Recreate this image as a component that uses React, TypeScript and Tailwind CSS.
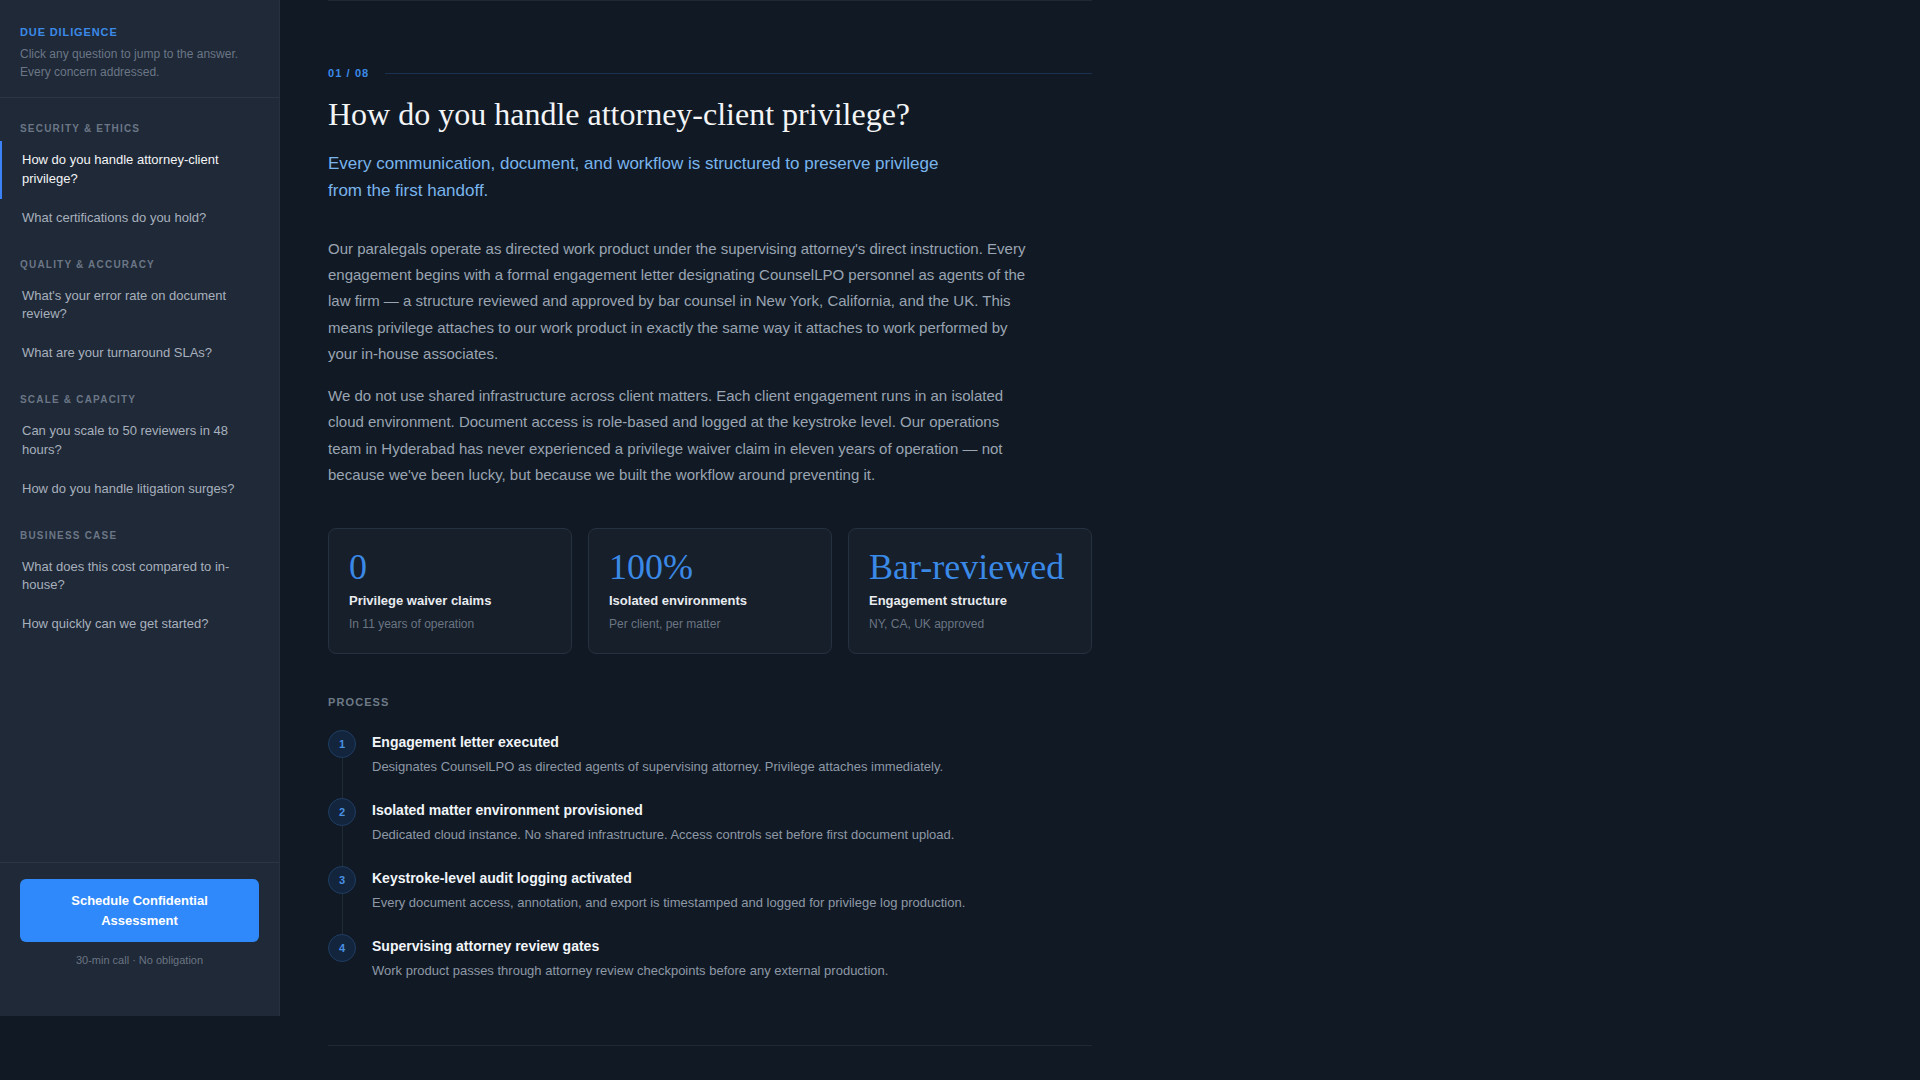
const groups = [
  {
    label: "Security & Ethics",
    items: ["How do you handle attorney-client privilege?", "What certifications do you hold?"],
  },
  {
    label: "Quality & Accuracy",
    items: ["What's your error rate on document review?", "What are your turnaround SLAs?"],
  },
  {
    label: "Scale & Capacity",
    items: ["Can you scale to 50 reviewers in 48 hours?", "How do you handle litigation surges?"],
  },
  {
    label: "Business Case",
    items: ["What does this cost compared to in-house?", "How quickly can we get started?"],
  },
];

const stats = [
  { value: "0", label: "Privilege waiver claims", sub: "In 11 years of operation" },
  { value: "100%", label: "Isolated environments", sub: "Per client, per matter" },
  { value: "Bar-reviewed", label: "Engagement structure", sub: "NY, CA, UK approved" },
];

const steps = [
  {
    title: "Engagement letter executed",
    desc: "Designates CounselLPO as directed agents of supervising attorney. Privilege attaches immediately.",
  },
  {
    title: "Isolated matter environment provisioned",
    desc: "Dedicated cloud instance. No shared infrastructure. Access controls set before first document upload.",
  },
  {
    title: "Keystroke-level audit logging activated",
    desc: "Every document access, annotation, and export is timestamped and logged for privilege log production.",
  },
  {
    title: "Supervising attorney review gates",
    desc: "Work product passes through attorney review checkpoints before any external production.",
  },
];

const Sidebar = () => (
  <aside className="w-[280px] h-[1016px] shrink-0 bg-[#1f2937] border-r border-[#263140] flex flex-col">
    <div className="px-5 pt-6 pb-4 border-b border-[#2b3645]">
      <div className="text-[11px] leading-4 font-bold uppercase tracking-[0.08em] text-[#3b8ae8]">
        Due Diligence
      </div>
      <p className="mt-[5px] text-[12px] leading-[18px] text-[#6b7686]">
        Click any question to jump to the answer.
        <br />
        Every concern addressed.
      </p>
    </div>

    <nav className="flex-1 pt-[23px]">
      {groups.map((g, gi) => (
        <div key={g.label} className={gi > 0 ? "mt-[19px]" : ""}>
          <div className="px-5 mb-[5px] text-[10px] leading-[15px] font-bold uppercase tracking-[0.12em] text-[#6b7686]">
            {g.label}
          </div>
          {g.items.map((q, qi) => {
            const active = gi === 0 && qi === 0;
            return (
              <a
                key={q}
                href="#"
                className={
                  active
                    ? "block border-l-2 border-[#3b82f6] pl-5 pr-5 py-2.5 text-[13px] leading-[1.45] text-[#f3f4f6]"
                    : "block border-l-2 border-transparent pl-5 pr-5 py-2.5 text-[13px] leading-[1.45] text-[#a7b0bd]"
                }
              >
                {q}
              </a>
            );
          })}
        </div>
      ))}
    </nav>

    <div className="px-5 pt-4 pb-12 border-t border-[#2b3645]">
      <button className="w-full rounded-md bg-[#2f89fb] py-3 px-4 text-[13px] leading-[1.5] font-bold text-white">
        Schedule Confidential
        <br />
        Assessment
      </button>
      <div className="mt-2.5 text-center text-[11px] leading-4 text-[#6b7483]">
        30-min call · No obligation
      </div>
    </div>
  </aside>
);

const StatCard = ({ value, label, sub }: { value: string; label: string; sub: string }) => (
  <div className="rounded-lg border border-[#253040] bg-[#161f2a] p-5">
    <div className="font-['Liberation_Serif',Georgia,serif] text-[36px] leading-none text-[#3b89e6]">
      {value}
    </div>
    <div className="mt-[7px] text-[13px] leading-[1.4] font-bold text-[#e8ebef]">{label}</div>
    <div className="mt-1.5 text-[12px] leading-[1.4] text-[#6b7583]">{sub}</div>
  </div>
);

const Step = ({ n, title, desc, last }: { n: number; title: string; desc: string; last: boolean }) => (
  <div className="flex gap-4">
    <div className="flex flex-col items-center">
      <div className="flex h-7 w-7 shrink-0 items-center justify-center rounded-full border border-[#1f3d63] bg-[#12253d] text-[11px] font-semibold text-[#4a90e2]">
        {n}
      </div>
      {!last && <div className="w-px flex-1 bg-[#1f2a37]" />}
    </div>
    <div className={last ? "" : "pb-[21px]"}>
      <div className="text-[14px] leading-6 font-bold text-[#f1f5f9]">{title}</div>
      <div className="mt-[3px] text-[13px] leading-5 text-[#8e98a6]">{desc}</div>
    </div>
  </div>
);

export default function App() {
  return (
    <div className="min-h-screen bg-[#111a24] flex font-['Liberation_Sans',Arial,sans-serif]">
      <Sidebar />
      <main className="flex-1 pl-12">
        <section className="w-[764px] border-y border-[#1f2935] py-16">
          <div className="flex items-center gap-4">
            <span className="text-[11px] leading-4 font-bold tracking-[0.1em] text-[#3b8ae8]">01 / 08</span>
            <div className="h-px flex-1 bg-[#1b3150]" />
          </div>

          <h1 className="mt-3.5 font-['Liberation_Serif',Georgia,serif] text-[32px] leading-[1.2] font-normal text-[#f3f4f6]">
            How do you handle attorney-client privilege?
          </h1>

          <p className="mt-[18px] max-w-[640px] text-[17px] leading-[1.57] text-[#79b4ec]">
            Every communication, document, and workflow is structured to preserve privilege from the first handoff.
          </p>

          <div className="mt-[31px] max-w-[704px] space-y-4 text-[15px] leading-[1.75] text-[#9aa4b2]">
            <p>
              Our paralegals operate as directed work product under the supervising attorney's direct instruction.
              Every engagement begins with a formal engagement letter designating CounselLPO personnel as agents of
              the law firm — a structure reviewed and approved by bar counsel in New York, California, and the UK.
              This means privilege attaches to our work product in exactly the same way it attaches to work
              performed by your in-house associates.
            </p>
            <p>
              We do not use shared infrastructure across client matters. Each client engagement runs in an isolated
              cloud environment. Document access is role-based and logged at the keystroke level. Our operations
              team in Hyderabad has never experienced a privilege waiver claim in eleven years of operation — not
              because we've been lucky, but because we built the workflow around preventing it.
            </p>
          </div>

          <div className="mt-10 grid grid-cols-3 gap-4">
            {stats.map((s) => (
              <StatCard key={s.label} {...s} />
            ))}
          </div>

          <div className="mt-10 text-[11px] leading-4 font-bold uppercase tracking-[0.1em] text-[#6e7987]">
            Process
          </div>
          <div className="mt-5">
            {steps.map((s, i) => (
              <Step key={s.title} n={i + 1} title={s.title} desc={s.desc} last={i === steps.length - 1} />
            ))}
          </div>
        </section>
      </main>
    </div>
  );
}
